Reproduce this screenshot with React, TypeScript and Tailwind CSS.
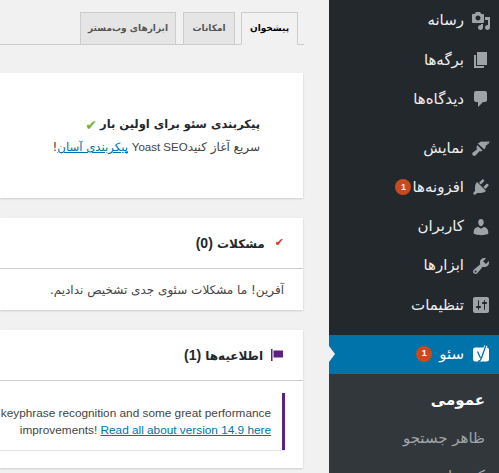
import React from "react";

const C = "#9ea3a8";
const icons: Record<string, React.ReactNode> = {
  media: (<path fill={C} d="M13 11V4c0-.55-.45-1-1-1h-1.670L9 1H5L3.670 3H2c-.55 0-1 .45-1 1v7c0 .55.45 1 1 1h10c.55 0 1-.45 1-1zM7 4.500c1.380 0 2.500 1.120 2.500 2.500S8.380 9.500 7 9.500 4.500 8.380 4.500 7 5.620 4.500 7 4.500zM14 6h5v10.500c0 1.380-1.120 2.500-2.500 2.500S14 17.880 14 16.500s1.120-2.500 2.500-2.500c.17 0 .34.020.5.050V9h-3V6zm-4 8.050V13h2v3.500c0 1.380-1.120 2.500-2.500 2.500S7 17.880 7 16.500 8.120 14 9.500 14c.17 0 .34.020.5.050z" />),
  pages: (<path fill={C} d="M6 15V2h10v13H6zm-1 1h8v2H3V5h2v11z" />),
  comments: (<path fill={C} d="M5 2h9c1.100 0 2 .9 2 2v7c0 1.100-.9 2-2 2h-2l-5 5v-5H5c-1.100 0-2-.9-2-2V4c0-1.100.9-2 2-2z" />),
  appearance: (<path fill={C} d="M19.500 3.500l-1.800 1 .8 1-2.300.3.4 1.200-1.800.2.100 1.300-1.500 3L6.800 5.400l3-1.700c.8-.4 1.500-.3 2.100.1L19.500 3.500zM6.200 7.100l5.300 5.300-1.500 1.200-1.300-.7L4 18l-2.500-.7L1.200 15l5-3.800-.8-1.300z" />),
  plugins: (<path fill={C} d="M13.110 4.360L9.870 7.600 8 5.730l3.240-3.240c.35-.34 1.050-.2 1.560.32.520.51.660 1.210.310 1.550zm-8 1.770l.910-1.120 9.010 9.010-1.190.84c-.710.710-2.630 1.160-3.820 1.160H6.140L4.900 17.260c-.59.59-1.540.59-2.120 0-.590-.58-.590-1.530 0-2.120l1.240-1.240v-3.880c0-1.130.4-3.050 1.090-3.890zm7.260 3.970l3.240-3.240c.340-.350 1.040-.2 1.550.31.520.51.670 1.210.320 1.560l-3.240 3.240z" />),
  users: (<path fill={C} d="M10 9.250c-2.270 0-2.730-3.440-2.730-3.440C7 4.020 7.820 2 9.970 2c2.160 0 2.980 2.020 2.710 3.810 0 0-.41 3.440-2.680 3.440zm0 2.570L12.720 10c2.390 0 4.520 2.330 4.520 4.530v2.490s-3.650 1.130-7.240 1.130c-3.650 0-7.240-1.130-7.240-1.130v-2.490c0-2.250 1.940-4.480 4.460-4.480z" />),
  tools: (<path fill={C} d="M16.680 9.770c-1.340 1.340-3.300 1.670-4.950.99l-5.410 6.520c-.99.990-2.590.990-3.570 0-.990-.980-.990-2.580 0-3.570l6.520-5.420c-.68-1.650-.35-3.610.99-4.950 1.280-1.280 3.120-1.620 4.720-1.060l-2.890 2.890 2.820 2.820 2.890-2.890c.560 1.600.220 3.440-1.060 4.720zM3.810 16.210c.4.390 1.030.39 1.420 0 .4-.4.4-1.030 0-1.430-.39-.39-1.020-.39-1.420 0-.39.4-.39 1.030 0 1.430z" />),
  settings: (<path fill={C} d="M18 16V4c0-1.100-.9-2-2-2H4c-1.100 0-2 .9-2 2v12c0 1.100.9 2 2 2h12c1.100 0 2-.9 2-2zM8 11h1c.55 0 1 .45 1 1s-.45 1-1 1H8v1.500c0 .280-.220.5-.5.5s-.5-.220-.5-.5V13H6c-.55 0-1-.45-1-1s.45-1 1-1h1V5.500c0-.280.220-.5.5-.5s.5.220.5.5V11zm5-2h-1c-.55 0-1-.45-1-1s.45-1 1-1h1V5.500c0-.280.220-.5.5-.5s.5.220.5.5V7h1c.55 0 1 .45 1 1s-.45 1-1 1h-1v5.500c0 .280-.220.5-.5.5s-.5-.220-.5-.5V9z" />),
};

function Icon({ name }: { name: string }) {
  return (
    <svg viewBox="0 0 20 20" className="w-5 h-5 shrink-0">
      {icons[name]}
    </svg>
  );
}

function Badge({ tight }: { tight?: boolean }) {
  return (
    <span className={(tight ? "mr-[1px] " : "mr-[7px] ") + "w-4 h-4 rounded-full bg-[#ca4a1f] text-white text-[9px] font-bold flex items-center justify-center shrink-0 [font-family:'Liberation_Sans',sans-serif]"}>
      1
    </span>
  );
}

function MenuItem({ icon, label, badge }: { icon: string; label: string; badge?: boolean }) {
  return (
    <div className="h-[39.2px] flex items-center pr-[8px] gap-[7px] text-[15px] text-[#eeeeee]">
      <Icon name={icon} />
      <span className="flex items-center">
        {label}
        {badge && <Badge tight />}
      </span>
    </div>
  );
}

function Card({ children, className }: { children: React.ReactNode; className?: string }) {
  return <div className={"bg-white mr-px shadow-[0_1px_2px_rgba(0,0,0,0.15)] " + (className ?? "")}>{children}</div>;
}

function Tab({ label, active, width }: { label: string; active?: boolean; width: string }) {
  return (
    <div
      className={
        width +
        " flex items-center justify-center whitespace-nowrap border border-[#cccccc] text-[9px] font-bold " +
        (active ? "bg-[#f1f1f1] border-b-[#f1f1f1] text-black h-[33px]" : "bg-[#e5e5e5] border-b-0 text-[#555555] h-[32px]")
      }
    >
      {label}
    </div>
  );
}

export default function App() {
  return (
    <div dir="rtl" className="w-[499px] h-[473px] overflow-hidden flex bg-[#f1f1f1] [font-family:'DejaVu_Sans',sans-serif]">
      <aside className="w-[170px] shrink-0 bg-[#23282d] flex flex-col pt-px">
        <MenuItem icon="media" label="رسانه" />
        <MenuItem icon="pages" label="برگه‌ها" />
        <MenuItem icon="comments" label="دیدگاه‌ها" />
        <div className="h-[10px]" />
        <MenuItem icon="appearance" label="نمایش" />
        <MenuItem icon="plugins" label="افزونه‌ها" badge />
        <MenuItem icon="users" label="کاربران" />
        <MenuItem icon="tools" label="ابزارها" />
        <MenuItem icon="settings" label="تنظیمات" />
        <div className="h-[10px]" />
        <div className="relative h-[39px] bg-[#0073aa] flex items-center pr-[8px] gap-[7px] text-[15px] text-white">
          <svg viewBox="0 0 20 20" className="w-5 h-5 shrink-0">
            <rect x="2" y="3.500" width="16" height="14" rx="2.500" fill="#fff" />
            <path fill="none" stroke="#fff" strokeWidth="3" d="M15 1.500L10.500 14" />
            <path fill="none" stroke="#0073aa" strokeWidth="1.300" d="M6.500 7.500l3 6.500M15 1l-4.500 13c-.5 1.500-1.500 3-3.500 3.500" />
          </svg>
          <span className="flex items-center">
            سئو
            <Badge />
          </span>
          <span className="absolute right-full top-1/2 -translate-y-1/2 translate-x-[6px] w-0 h-0 border-y-[8px] border-y-transparent border-l-[6px] border-l-[#f1f1f1]" />
        </div>
        <div className="flex-1 bg-[#32373c] pr-[14px] text-[15px] overflow-hidden">
          <div className="h-[52px] flex items-center text-white font-bold pt-[1px]">عمومی</div>
          <div className="h-[24px] mt-px flex items-center text-[#a0a5aa]">ظاهر جستجو</div>
          <div className="h-[24px] mt-[14px] flex items-center text-[#a0a5aa]">کنسول جستجو</div>
        </div>
      </aside>

      <main className="flex-1 pr-[25px] pt-[12px] text-[12px] text-[#444444]">
        <div className="flex items-start gap-[6px] h-[32px] border-b border-[#cccccc] box-content pr-[6px]">
          <Tab active width="w-[57px]" label="پیشخوان" />
          <Tab width="w-[52px]" label="امکانات" />
          <div className="mr-px"><Tab width="w-[96px]" label="ابزارهای وب‌مستر" /></div>
        </div>

        <Card className="mt-[28px] h-[125px] pr-[43px] pt-[42px]">
          <div className="flex items-center gap-[3px] h-[20px] text-[11.5px] font-bold text-[#23282d]">
            پیکربندی سئو برای اولین بار
            <span className="text-[#7ab02d] text-[14px]">✔</span>
          </div>
          <div className="mt-[2px] text-[12px] text-[#444444] leading-[20px]">
            سریع آغاز کنید<span className="text-[11.5px] [font-family:'Liberation_Sans',sans-serif]">Yoast SEO</span> <a className="text-[#0073aa] text-[11.7px] underline">پیکربندی آسان</a>!
          </div>
        </Card>

        <Card className="mt-[20px]">
          <div className="h-[50px] border-b border-[#cccccc] box-content flex items-center pr-[19px] gap-[10px] text-[12px] font-bold text-[#23282d]">
            <span className="text-[#dc3232] text-[11px]">✔</span>
            <span>مشکلات <span className="text-[14px] [font-family:'Liberation_Sans',sans-serif]">(0)</span></span>
          </div>
          <div className="h-[41px] flex items-center pr-[19px] text-[12px]">آفرین! ما مشکلات سئوی جدی تشخیص ندادیم.</div>
        </Card>

        <Card className="mt-[20px]">
          <div className="h-[50px] border-b border-[#cccccc] box-content flex items-center pr-[19px] gap-[7px] text-[12px] font-bold text-[#23282d]">
            <svg viewBox="0 0 14 14" className="w-[14px] h-[14px] shrink-0">
              <path fill="#5b2380" d="M1 1h1.500v12H1zM3.500 2.500H13v7H3.500z" />
            </svg>
            <span>اطلاعیه‌ها <span className="text-[14px] [font-family:'Liberation_Sans',sans-serif]">(1)</span></span>
          </div>
          <div className="pt-[12px] pb-[18px] pr-[18px]">
            <div className="h-[57px] bg-white border-r-[3px] border-[#5b2380] shadow-[0_1px_1px_rgba(0,0,0,0.1)] pr-[11px] flex flex-col justify-center items-start overflow-hidden whitespace-nowrap text-[11.8px] leading-[17px] [font-family:'Liberation_Sans',sans-serif]">
              <div dir="ltr">keyphrase recognition and some great performance</div>
              <div dir="ltr">improvements! <a className="text-[#0073aa] underline">Read all about version 14.9 here</a></div>
            </div>
          </div>
        </Card>
      </main>
    </div>
  );
}
